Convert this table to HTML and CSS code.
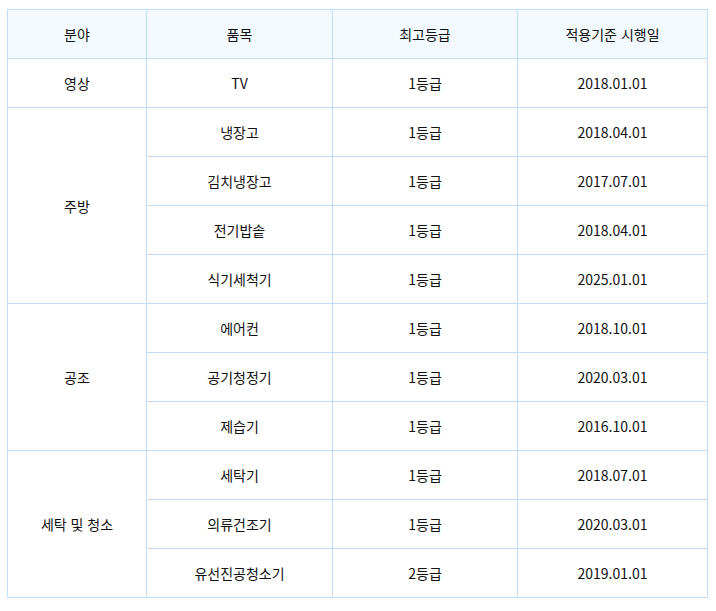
FILE: index.html
```html
<!DOCTYPE html>
<html lang="ko">
<head>
<meta charset="utf-8">
<link rel="stylesheet" href="styles.css">
</head>
<body>
<table class="grade-table">
  <colgroup>
    <col class="c1"><col class="c2"><col class="c3"><col class="c4">
  </colgroup>
  <thead>
    <tr><th>분야</th><th>품목</th><th>최고등급</th><th>적용기준 시행일</th></tr>
  </thead>
  <tbody>
    <tr><td>영상</td><td>TV</td><td>1등급</td><td>2018.01.01</td></tr>
    <tr><td rowspan="4">주방</td><td>냉장고</td><td>1등급</td><td>2018.04.01</td></tr>
    <tr><td>김치냉장고</td><td>1등급</td><td>2017.07.01</td></tr>
    <tr><td>전기밥솥</td><td>1등급</td><td>2018.04.01</td></tr>
    <tr><td>식기세척기</td><td>1등급</td><td>2025.01.01</td></tr>
    <tr><td rowspan="3">공조</td><td>에어컨</td><td>1등급</td><td>2018.10.01</td></tr>
    <tr><td>공기청정기</td><td>1등급</td><td>2020.03.01</td></tr>
    <tr><td>제습기</td><td>1등급</td><td>2016.10.01</td></tr>
    <tr><td rowspan="3">세탁 및 청소</td><td>세탁기</td><td>1등급</td><td>2018.07.01</td></tr>
    <tr><td>의류건조기</td><td>1등급</td><td>2020.03.01</td></tr>
    <tr><td>유선진공청소기</td><td>2등급</td><td>2019.01.01</td></tr>
  </tbody>
</table>
</body>
</html>
```
FILE: styles.css
```css
html, body {
  margin: 0;
  padding: 0;
  background: #ffffff;
}
body {
  padding: 9px 0 0 7px;
  font-family: "Noto Sans CJK KR", "Noto Sans", sans-serif;
  font-size: 14px;
  color: #111111;
}
.grade-table {
  width: 700px;
  border-collapse: collapse;
  table-layout: fixed;
  border: 1px solid #c2dcfc;
}
.c1 { width: 139px; }
.c2 { width: 186px; }
.c3 { width: 185px; }
.c4 { width: 190px; }
.grade-table th,
.grade-table td {
  border: 1px solid #c2dcfc;
  height: 48px;
  padding: 0;
  text-align: center;
  vertical-align: middle;
  font-weight: normal;
  line-height: 20px;
  box-sizing: border-box;
}
.grade-table tr {
  height: 49px;
}
.grade-table th {
  background: #f3faff;
}
```
